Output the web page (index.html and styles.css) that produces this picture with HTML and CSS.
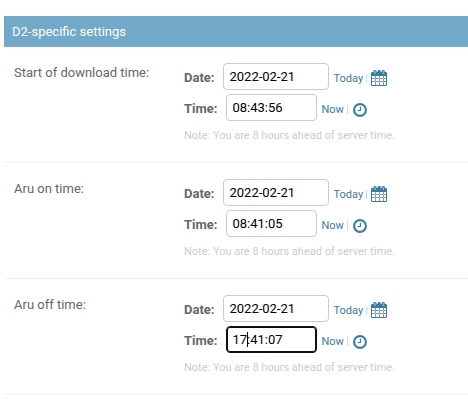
FILE: index.html
```html
<!DOCTYPE html>
<html lang="en">
<head>
<meta charset="utf-8">
<title>D2-specific settings</title>
<link rel="stylesheet" href="styles.css">
</head>
<body>
<svg class="defs" width="0" height="0">
  <symbol id="calendar" viewBox="0 0 16 16">
    <path fill="currentColor" fill-rule="evenodd" d="M1.3 2H2.4V1.2Q2.4 0 4 0T5.6 1.2V2H6.6V1.2Q6.6 0 8.2 0T9.8 1.2V2H10.6V1.2Q10.6 0 12.2 0T13.8 1.2V2H14.8Q16 2 16 3.2V14.8Q16 16 14.8 16H1.2Q0 16 0 14.8V3.2Q0 2 1.3 2ZM1 6V8H4V6ZM5 6V8H8V6ZM9 6V8H12V6ZM13 6V8H15V6ZM1 9V11H4V9ZM5 9V11H8V9ZM9 9V11H12V9ZM13 9V11H15V9ZM1 12V15H4V12ZM5 12V15H8V12ZM9 12V15H12V12ZM13 12V15H15V12Z"/>
    <path d="M1 8.5H15M1 11.5H15M4.5 6V15M8.5 6V15M12.5 6V15" stroke="#fff" stroke-opacity=".3" stroke-width="1"/>
    <path d="M4 1V4M12.2 1V4" stroke="#fff" stroke-width=".6"/>
  </symbol>
  <symbol id="clock" viewBox="0 0 14 14">
    <circle cx="7" cy="7" r="5.9" fill="none" stroke="currentColor" stroke-width="2.1"/>
    <path d="M7.5 3.7V7.5H4.7" fill="none" stroke="currentColor" stroke-width="1.2"/>
  </symbol>
</svg>
<section class="module">
  <h2>D2-specific settings</h2>
  <div class="row">
    <div class="label">Start of download time:</div>
    <div class="fields">
      <div class="line"><b>Date:</b><span class="input date">2022-02-21</span><a>Today</a><i></i><svg class="cal"><use href="#calendar"/></svg></div>
      <div class="line"><b>Time:</b><span class="input time">08:43:56</span><a>Now</a><i></i><svg class="clock"><use href="#clock"/></svg></div>
      <p>Note: You are 8 hours ahead of server time.</p>
    </div>
  </div>
  <div class="row">
    <div class="label">Aru on time:</div>
    <div class="fields">
      <div class="line"><b>Date:</b><span class="input date">2022-02-21</span><a>Today</a><i></i><svg class="cal"><use href="#calendar"/></svg></div>
      <div class="line"><b>Time:</b><span class="input time">08:41:05</span><a>Now</a><i></i><svg class="clock"><use href="#clock"/></svg></div>
      <p>Note: You are 8 hours ahead of server time.</p>
    </div>
  </div>
  <div class="row">
    <div class="label">Aru off time:</div>
    <div class="fields">
      <div class="line"><b>Date:</b><span class="input date">2022-02-21</span><a>Today</a><i></i><svg class="cal"><use href="#calendar"/></svg></div>
      <div class="line"><b>Time:</b><span class="input time focused">17<span class="caret"></span>:41:07</span><a>Now</a><i></i><svg class="clock"><use href="#clock"/></svg></div>
      <p>Note: You are 8 hours ahead of server time.</p>
    </div>
  </div>
</section>
</body>
</html>
```
FILE: styles.css
```css
* { box-sizing: border-box; }
body {
  margin: 0;
  background: #fff;
  color: #666;
  font: 13px/15px Roboto, sans-serif;
}
.defs { display: block; }
.module { margin: 16px 0 0 4px; }
h2 {
  height: 31px;
  margin: 0;
  padding: 8px;
  background: #72a9c8;
  color: #fff;
  font-size: 13px;
  font-weight: 400;
  line-height: 15px;
}
.row {
  display: flex;
  height: 116px;
  padding: 16px 10px 0;
  border-bottom: 1px solid #eee;
}
.label { width: 169.6px; margin-right: .4px; padding-top: 2px; }
.line {
  display: flex;
  align-items: center;
  height: 27px;
  margin-bottom: 4px;
}
.line b { padding-top: 2px; font-weight: 700; }
.input {
  height: 27px;
  padding: 5px 5px 5px 5.5px;
  border: 1px solid #ccc;
  border-radius: 4px;
  color: #000;
}
.date { width: 106px; margin-left: 8.5px; }
.time { width: 91px; margin-left: 8.5px; }
.focused { border-color: #101010; box-shadow: inset 0 0 0 1px #101010; }
.caret {
  display: inline-block;
  width: 1px;
  height: 15px;
  margin-right: -1px;
  background: #000;
  vertical-align: top;
}
.line a { margin-left: 4.5px; padding-top: 3px; color: #3b7b9c; font-size: 11px; }
.line i { width: 1px; height: 9px; margin: 3px 4px 0 3px; background: #d8d8d8; }
.cal { width: 16px; height: 16px; margin-top: 3px; color: #3b7d9f; }
.clock { width: 14px; height: 14px; margin: 5px 0 0 1px; color: #3b7d9f; }
p { margin: 7px 0 0; color: #ccc; font-size: 11px; line-height: 15px; }
```
